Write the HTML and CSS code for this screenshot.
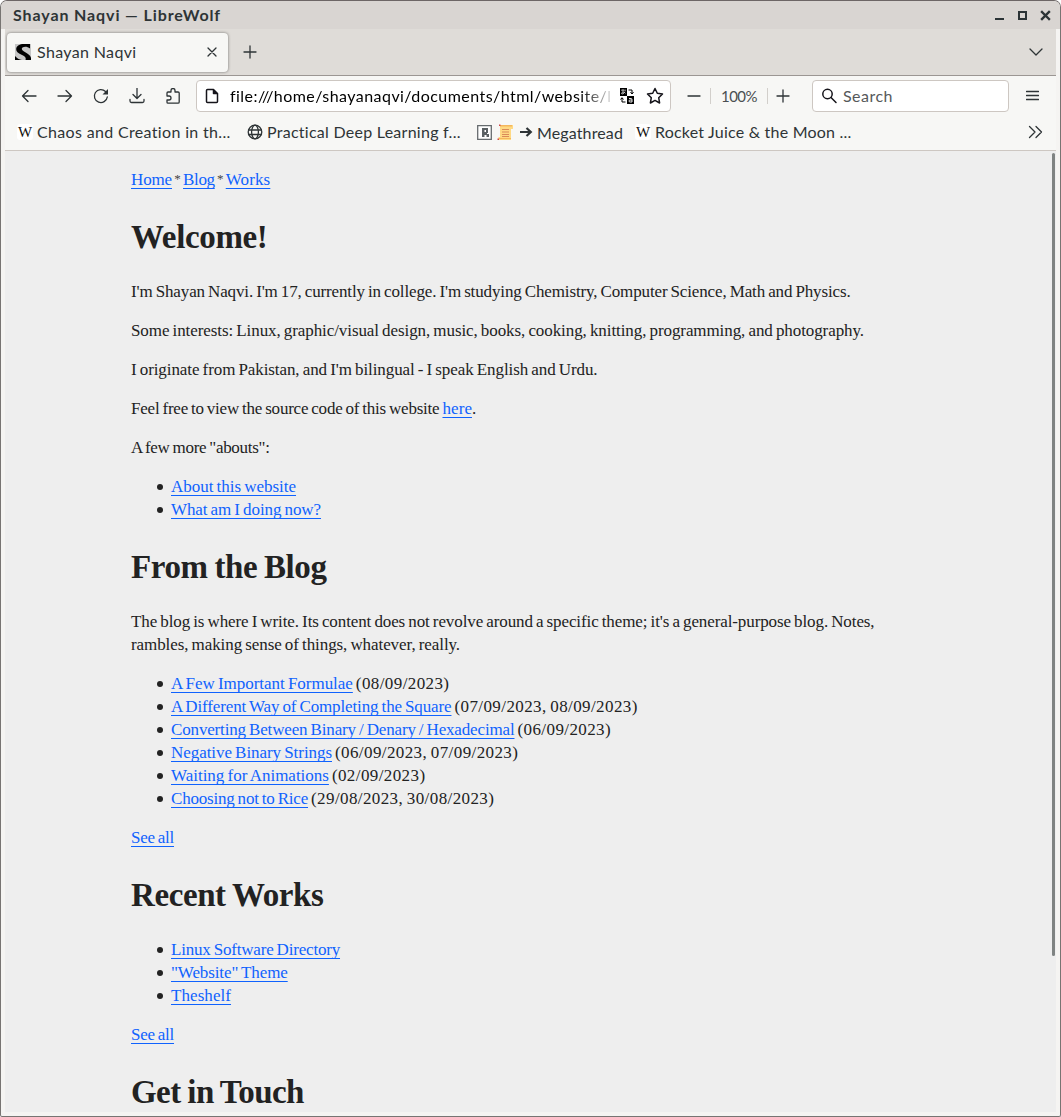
FILE: index.html
```html
<!DOCTYPE html>
<html lang="en">
<head>
<meta charset="utf-8">
<title>Shayan Naqvi</title>
<link rel="stylesheet" href="styles.css">
</head>
<body>
<div class="window">
  <header class="titlebar">
    <span class="window-title">Shayan Naqvi — LibreWolf</span>
    <svg class="window-controls" width="60" height="14" viewBox="0 0 60 14">
      <path d="M0 10h9v2H0z"/>
      <path d="M23 3h9v9h-9zM25 5v5h5V5z" fill-rule="evenodd"/>
      <path d="M47 4l7 7M54 4l-7 7" stroke="#2b3336" stroke-width="2.4" stroke-linecap="square" fill="none"/>
    </svg>
  </header>
  <div class="browser">
    <div class="tabs">
      <div class="tab">
        <svg width="16" height="16" viewBox="0 0 16 16"><path fill="#c6c6c6" d="M0 0h16v16H0z"/><path fill="#000" d="M15 0v4.500C12.500 2.500 9.500 2.200 7.500 3.500 6 4.800 7 6.300 9 7.500c3.500 2 6.500 3.500 7 6.500v2h-5.500c1-2.500-1-4-4-5.300C3 9.200 1 7.800 1.200 5 1.500 1.800 5 0 8.500 0zM0 12c2 2.300 4 3.500 7 4H0z"/></svg>
        <span class="tab-label">Shayan Naqvi</span>
        <svg class="line" width="10" height="10" viewBox="0 0 10 10"><path d="M1 1l8 8M9 1L1 9"/></svg>
      </div>
      <svg class="line new-tab" width="14" height="14" viewBox="0 0 14 14"><path d="M7 1v12M1 7h12"/></svg>
      <svg class="line all-tabs" width="14" height="8" viewBox="0 0 14 8"><path d="M1 1l6 6 6-6"/></svg>
    </div>
    <div class="toolbar">
      <div class="nav-buttons">
        <svg class="line" width="16" height="16" viewBox="0 0 16 16"><path d="M7 2.500L1.500 8 7 13.500M1.500 8H15"/></svg>
        <svg class="line" width="16" height="16" viewBox="0 0 16 16"><path d="M9 2.500L14.500 8 9 13.500M14.500 8H1"/></svg>
        <svg class="line" width="16" height="16" viewBox="0 0 16 16"><path d="M14.300 9A6.500 6.500 0 1 1 12.500 3.500"/><path d="M15 1v5.500H9.500z" fill="#2e3436" stroke="none"/></svg>
        <svg class="line" width="16" height="16" viewBox="0 0 16 16"><path d="M8 0v10M4 6.500L8 10.500l4-4M1 11.500v1.500q0 1.500 1.500 1.500h11q1.500 0 1.500-1.500v-1.500"/></svg>
        <svg class="line" width="16" height="16" viewBox="0 0 16 16"><path d="M2 7V5q0-1 1-1h3V2.500a2 2 0 0 1 4 0V4h3q1.200 0 1.200 1v9q0 1.200-1.200 1.200H3q-1 0-1-1V12h2a1.900 1.900 0 0 0 0-4H2z"/></svg>
      </div>
      <div class="address">
        <svg class="line dark" width="14" height="16" viewBox="0 0 14 16"><path d="M2.500 1.500h6l4 4v8q0 1-1 1h-9q-1 0-1-1v-11q0-1 1-1zM8.500 1.500v4h4"/><path d="M8 1l5 5H8z" fill="#15141a" stroke="none"/></svg>
        <span class="url">file:///home/shayanaqvi/documents/html/website/l</span>
        <svg class="translate" width="16" height="16" viewBox="0 0 16 16"><path d="M1 0h7v8H1zM8 8h7v8H8z"/><path d="M9.500 2H13v4M11.500 4.200L13 6l1.500-1.800M6.500 14H3v-4M1.500 11.500L3 9.700l1.500 1.800" fill="none" stroke="#000"/><path d="M2 2.200h5M4 1v5M6 3.500C5 6 3 6.500 2.500 5.500c-.3-1.500 2.700-2 4-.2" fill="none" stroke="#fff" stroke-width=".6"/><path d="M10 10.500h2q1 0 1 1V14h-2q-1 0-1-1t1-1h2" fill="none" stroke="#fff" stroke-width=".9"/></svg>
        <svg class="line dark star" width="18" height="18" viewBox="0 0 18 18"><path d="M9 1.500l2.300 4.800 5.200.7-3.800 3.700.9 5.300L9 13.400 4.400 16l.9-5.300L1.500 7l5.200-.7z"/></svg>
      </div>
      <div class="zoom">
        <svg class="line" width="14" height="14" viewBox="0 0 14 14"><path d="M1 7h12"/></svg>
        <span class="zoom-value">100%</span>
        <svg class="line" width="14" height="14" viewBox="0 0 14 14"><path d="M1 7h12M7 1v12"/></svg>
      </div>
      <div class="search">
        <svg class="line dark" width="16" height="16" viewBox="0 0 16 16"><circle cx="5.500" cy="6" r="4.700"/><path d="M9 9.500l5 5"/></svg>
        <span>Search</span>
      </div>
      <svg class="line menu" width="13" height="12" viewBox="0 0 13 12"><path d="M.5 1.500h12M.5 5.500h12M.5 9.500h12"/></svg>
    </div>
    <div class="bookmarks">
      <span class="wiki">W</span><span class="bm chaos">Chaos and Creation in th...</span>
      <svg class="line globe" width="16" height="16" viewBox="0 0 16 16"><circle cx="8" cy="8" r="6.800"/><ellipse cx="8" cy="8" rx="3.400" ry="6.800"/><path d="M1.500 6h13M1.500 10.500h13"/></svg><span class="bm practical">Practical Deep Learning f...</span>
      <svg class="rlogo" width="15" height="15" viewBox="0 0 15 15"><path d="M.7.7h13.600v13.600H.7z" fill="#fff" stroke="#666b6e" stroke-width="1.300"/><path fill="#5a6063" d="M5 3h6v5h-1v1h2v3H9.500v-2H7.500v2H5zM7.500 5v2h1.500V5z" fill-rule="evenodd"/></svg>
      <svg class="scroll" width="17" height="17" viewBox="0 0 17 17"><path fill="#ffd983" d="M3 1h13v4h-2v11H1.500V13H3z"/><path fill="#f4b75c" d="M3 1h12v1.500H3zM2 14h12v1H2z"/><path d="M5 5.500h7M5 8h7M5 10.500h7M5 12.500h7" stroke="#d98a58" stroke-width="1.100"/><path fill="#d1464a" d="M2 .5h1.500V2H2zM.5 14.500H2V16H.5z"/></svg>
      <svg class="arrow" width="14" height="12" viewBox="0 0 14 12"><path d="M1 6h10M7.500 2L11.800 6l-4.300 4" fill="none" stroke="#2e3436" stroke-width="2.200"/></svg><span class="bm mega">Megathread</span>
      <span class="wiki second">W</span><span class="bm rocket">Rocket Juice &amp; the Moon ...</span>
      <svg class="line overflow" width="15" height="14" viewBox="0 0 15 14"><path d="M1.500 1.500L7 7l-5.500 5.500M8 1.500L13.500 7 8 12.500"/></svg>
    </div>
    <main class="viewport">
      <article class="page">
        <nav><a class="home" href="#">Home</a><i>*</i><a class="blog" href="#">Blog</a><i>*</i><a class="works" href="#">Works</a></nav>
        <h1 class="welcome">Welcome!</h1>
        <p class="about">I'm Shayan Naqvi. I'm 17, currently in college. I'm studying Chemistry, Computer Science, Math and Physics.</p>
        <p class="interests">Some interests: Linux, graphic/visual design, music, books, cooking, knitting, programming, and photography.</p>
        <p class="origin">I originate from Pakistan, and I'm bilingual - I speak English and Urdu.</p>
        <p class="source">Feel free to view the source code of this website <a class="here" href="#">here</a>.</p>
        <p class="more">A few more "abouts":</p>
        <ul>
          <li><a class="about-site" href="#">About this website</a></li>
          <li><a class="now" href="#">What am I doing now?</a></li>
        </ul>
        <h1 class="from-blog">From the Blog</h1>
        <p><span class="intro-one">The blog is where I write. Its content does not revolve around a specific theme; it's a general-purpose blog. Notes,</span><br><span class="intro-two">rambles, making sense of things, whatever, really.</span></p>
        <ul>
          <li><a class="formulae" href="#">A Few Important Formulae</a><time>(08/09/2023)</time></li>
          <li><a class="square" href="#">A Different Way of Completing the Square</a><time>(07/09/2023, 08/09/2023)</time></li>
          <li><a class="convert" href="#">Converting Between Binary / Denary / Hexadecimal</a><time>(06/09/2023)</time></li>
          <li><a class="strings" href="#">Negative Binary Strings</a><time>(06/09/2023, 07/09/2023)</time></li>
          <li><a class="waiting" href="#">Waiting for Animations</a><time>(02/09/2023)</time></li>
          <li><a class="rice" href="#">Choosing not to Rice</a><time>(29/08/2023, 30/08/2023)</time></li>
        </ul>
        <p><a class="see-all" href="#">See all</a></p>
        <h1 class="recent">Recent Works</h1>
        <ul>
          <li><a class="directory" href="#">Linux Software Directory</a></li>
          <li><a class="theme" href="#">"Website" Theme</a></li>
          <li><a class="theshelf" href="#">Theshelf</a></li>
        </ul>
        <p><a class="see-all" href="#">See all</a></p>
        <h1 class="touch">Get in Touch</h1>
      </article>
      <div class="scrollbar"></div>
    </main>
  </div>
</div>
</body>
</html>
```
FILE: styles.css
```css
* { box-sizing: border-box; }
body { margin: 0; background: #fff; overflow: hidden; }
svg { display: block; flex: none; }
.line { fill: none; stroke: #2e3436; stroke-width: 1.3; stroke-linecap: round; stroke-linejoin: round; }
.dark { stroke: #15141a; stroke-width: 1.5; }

/* Window frame */
.window { width: 1061px; height: 1117px; border: 1px solid #777472; border-top-color: #6d6666; border-radius: 7px 7px 2px 2px; background: #f5f4f2; overflow: hidden; font: 16px Lato, sans-serif; color: #2e3436; white-space: nowrap; }
.titlebar { height: 28px; background: #d9d5d2; display: flex; align-items: center; justify-content: space-between; padding: 0 5px 2px 12px; }
.window-title { font-weight: bold; letter-spacing: .887px; }
.window-controls { fill: #2b3336; margin-top: 2px; }
.browser { margin: 0 4px; height: 1083px; display: flex; flex-direction: column; background: #f7f7f5; }

/* Tab strip */
.tabs { height: 47px; flex: none; background: #dfdcd8; border-bottom: 1px solid #9b9693; display: flex; align-items: center; padding: 0 13px 0 2px; }
.tab { width: 221px; height: 39px; border-radius: 4px; background: #f7f7f5; box-shadow: 0 0 3px rgba(0,0,0,.5); display: flex; align-items: center; padding: 0 11px 0 8px; }
.tab-label { margin: 0 auto 2px 6px; letter-spacing: .352px; }
.new-tab { margin-left: 15px; }
.all-tabs { margin-left: auto; }

/* Navigation toolbar */
.toolbar { height: 41px; flex: none; display: flex; align-items: center; padding: 0 17px 1px 6px; }
.nav-buttons { display: flex; width: 185px; }
.nav-buttons svg { margin: 0 10px; }
.address, .search { height: 32px; border: 1px solid #cdc7c2; border-radius: 4px; background: #fff; display: flex; align-items: center; }
.address { width: 475px; padding: 0 6px 0 8px; color: #000; }
.url { width: 384px; margin: 0 0 2px 11px; letter-spacing: .449px; -webkit-mask-image: linear-gradient(to right, #000 350px, transparent 386px); mask-image: linear-gradient(to right, #000 350px, transparent 386px); }
.translate { margin-left: 5px; }
.star { margin-left: auto; }
.zoom { display: flex; align-items: center; width: 141px; padding-left: 16px; }
.zoom-value { width: 58px; height: 16px; border: solid #d2cfcb; border-width: 0 1px; font-size: 15px; line-height: 16px; letter-spacing: -.55px; padding-left: 10px; margin: 0 8px 0 9px; color: #4a4f51; }
.search { width: 197px; padding-left: 9px; letter-spacing: .484px; color: #55585a; }
.search span { margin: 0 0 2px 5px; }
.menu { margin-left: auto; }

/* Bookmarks toolbar */
.bookmarks { height: 34px; flex: none; border-bottom: 1px solid #cdc7c2; display: flex; align-items: center; padding: 0 13px 3px 12px; }
.wiki { width: 16px; height: 16px; border-radius: 3px; background: #fff; color: #111; font: 15px/17px "Liberation Serif", serif; display: flex; justify-content: center; }
.bm { margin: 0 0 1px 4px; }
.chaos { width: 194px; letter-spacing: .339px; margin-right: 16px; }
.practical { width: 195px; letter-spacing: .264px; margin-right: 15px; }
.scroll { margin-left: 5px; }
.arrow { margin-left: 5px; }
.mega { width: 86px; letter-spacing: .126px; margin: 0 0 0 4px; }
.second { margin-left: 12px; }
.rocket { letter-spacing: .21px; }
.overflow { margin-left: auto; }

/* Page content */
.viewport { flex: 1; min-height: 0; position: relative; background: #eee; overflow: hidden; }
.page { width: 799px; margin: 0 auto; padding-top: 17px; font: 17px/23px "Liberation Serif", serif; word-spacing: -1px; color: #222; }
.page h1 { font-size: 33px; line-height: 46px; margin: 23px 0 20px; }
.page p { margin: 16px 0; }
.page h1 + p, .page h1 + ul { margin-top: 20px; }
.page ul { margin: 16px 0; padding-left: 40px; list-style: none; }
.page li::before { content: ""; display: inline-block; width: 6px; height: 6px; border-radius: 50%; background: #222; margin: 0 8px 2px -14px; }
.page i { font-style: normal; font-size: 13px; display: inline-block; width: 11px; text-align: center; color: #444; vertical-align: 2px; line-height: 1; }
a { color: #0f62fe; text-decoration: underline; text-decoration-thickness: 1px; text-underline-offset: 3px; text-decoration-skip-ink: none; }
time { margin-left: 3px; letter-spacing: .4px; }
.scrollbar { position: absolute; right: 1px; top: 2px; width: 3px; height: 803px; border-radius: 2px; background: #7f8382; }

/* Optical tracking */
.home { letter-spacing: -.136px; }
.blog { letter-spacing: -.341px; }
.works { letter-spacing: .128px; }
.welcome { letter-spacing: -.346px; }
.about { letter-spacing: -.134px; }
.interests { letter-spacing: -.083px; }
.origin { letter-spacing: -.085px; }
.source { letter-spacing: -.217px; }
.here { letter-spacing: .062px; }
.more { letter-spacing: -.296px; }
.about-site { letter-spacing: -.027px; }
.now { letter-spacing: -.089px; }
.from-blog { letter-spacing: -.413px; }
.intro-one { letter-spacing: -.103px; }
.intro-two { letter-spacing: -.081px; }
.formulae { letter-spacing: -.03px; }
.square { letter-spacing: -.13px; }
.convert { letter-spacing: -.154px; }
.strings { letter-spacing: -.057px; }
.waiting { letter-spacing: -.01px; }
.rice { letter-spacing: -.201px; }
.see-all { letter-spacing: -.255px; }
.recent { letter-spacing: -.407px; }
.directory { letter-spacing: -.192px; }
.theme { letter-spacing: -.111px; }
.theshelf { letter-spacing: .066px; }
.touch { letter-spacing: -.555px; }
```
